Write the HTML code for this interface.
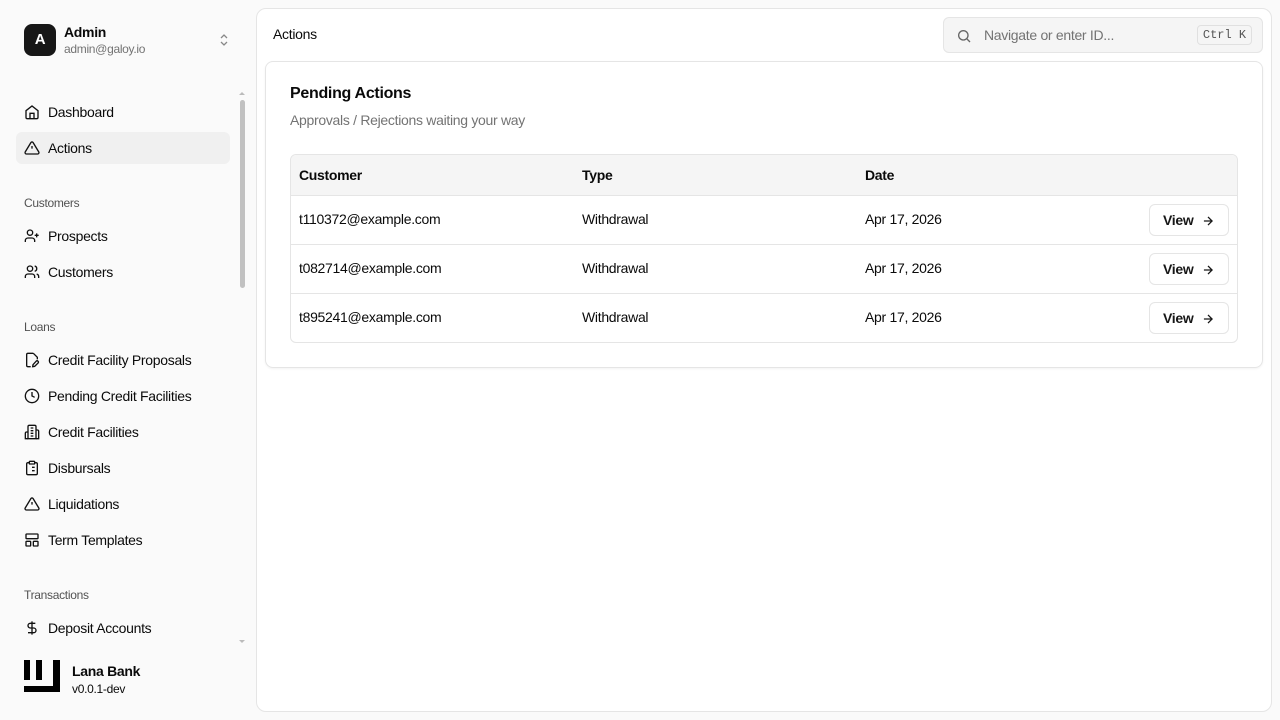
<!DOCTYPE html>
<html><head><meta charset="utf-8"><style>
*{box-sizing:border-box;margin:0;padding:0}
body{width:1280px;height:720px;background:#fafafa;font-family:"Liberation Sans",sans-serif;color:#0a0a0a;position:relative;overflow:hidden;letter-spacing:-0.3px}
.sb{position:absolute;left:0;top:0;width:256px;height:720px}
.av{position:absolute;left:24px;top:24px;width:32px;height:32px;background:#171717;border-radius:8px;color:#fff;font-size:15px;font-weight:bold;text-align:center;line-height:32px}
.nm{position:absolute;left:64px;top:24px;font-size:14px;font-weight:bold}
.em{position:absolute;left:64px;top:42px;font-size:12px;color:#737373}
.item{position:absolute;left:16px;width:214px;height:32px;border-radius:6px;font-size:14px;line-height:32px;padding-left:32px}
.item svg{position:absolute;left:8px;top:8px}
.act{background:#f0f0f0}
.grp{position:absolute;left:24px;font-size:12px;color:#525252}
.sc{position:absolute;left:240px;top:100px;width:5px;height:188px;background:#c1c1c1;border-radius:3px}
.main{position:absolute;left:256px;top:8px;width:1016px;height:704px;background:#fff;border:1px solid #e5e5e5;border-radius:10px}
.card{position:absolute;left:265px;top:61px;width:998px;height:307px;border:1px solid #e5e5e5;border-radius:8px;box-shadow:0 1px 2px rgba(0,0,0,.05)}
.srch{position:absolute;left:943px;top:17px;width:320px;height:36px;background:#f5f5f5;border:1px solid #e5e5e5;border-radius:6px}
.tbl{position:absolute;left:290px;top:154px;width:948px;height:189px;border:1px solid #e5e5e5;border-radius:6px;overflow:hidden}
.row{position:absolute;left:0;width:100%;height:49px;border-top:1px solid #e5e5e5;font-size:14px}
.row span{position:absolute;top:15px}
.btn{position:absolute;left:858px;top:8px;width:80px;height:32px;border:1px solid #e5e5e5;border-radius:6px;font-size:14px;font-weight:bold;line-height:30px;padding-left:13px;color:#171717}
.btn svg{position:absolute;left:51px;top:9px}
</style></head><body>
<div class="sb">
<div class="av">A</div><div class="nm">Admin</div><div class="em">admin@galoy.io</div>
<svg style="position:absolute;left:218px;top:33px" width="12" height="14" viewBox="0 0 12 14" fill="none" stroke="#888" stroke-width="1.3"><path d="M3 5l3-3 3 3M3 9l3 3 3-3"/></svg>
<div class="item" style="top:96px"><svg width="16" height="16" viewBox="0 0 24 24" fill="none" stroke="#111" stroke-width="2"><path d="M3 10l9-7 9 7v10a2 2 0 0 1-2 2H5a2 2 0 0 1-2-2z"/><path d="M9 22v-8h6v8"/></svg>Dashboard</div>
<div class="item act" style="top:132px"><svg width="16" height="16" viewBox="0 0 24 24" fill="none" stroke="#111" stroke-width="2"><path d="M10.3 3.9L1.8 18a2 2 0 0 0 1.7 3h17a2 2 0 0 0 1.7-3L13.7 3.9a2 2 0 0 0-3.4 0z"/><path d="M12 9v4M12 17h.01"/></svg>Actions</div>
<div class="grp" style="top:196px">Customers</div>
<div class="item" style="top:220px"><svg width="16" height="16" viewBox="0 0 24 24" fill="none" stroke="#111" stroke-width="2"><circle cx="9" cy="7" r="4"/><path d="M2 21v-2a4 4 0 0 1 4-4h6a4 4 0 0 1 4 4v2M19 8v6M16 11h6"/></svg>Prospects</div>
<div class="item" style="top:256px"><svg width="16" height="16" viewBox="0 0 24 24" fill="none" stroke="#111" stroke-width="2"><circle cx="9" cy="7" r="4"/><path d="M2 21v-2a4 4 0 0 1 4-4h6a4 4 0 0 1 4 4v2M16 3.1a4 4 0 0 1 0 7.8M22 21v-2a4 4 0 0 0-3-3.9"/></svg>Customers</div>
<div class="grp" style="top:320px">Loans</div>
<div class="item" style="top:344px"><svg width="16" height="16" viewBox="0 0 24 24" fill="none" stroke="#111" stroke-width="2"><path d="M14 2H6a2 2 0 0 0-2 2v16a2 2 0 0 0 2 2h4M14 2l6 6v3"/><path d="M18.4 13.6a2 2 0 0 1 2.8 2.8L16 21.5l-3 .5.5-3z"/></svg>Credit Facility Proposals</div>
<div class="item" style="top:380px"><svg width="16" height="16" viewBox="0 0 24 24" fill="none" stroke="#111" stroke-width="2"><circle cx="12" cy="12" r="10"/><path d="M12 6v6l4 2"/></svg>Pending Credit Facilities</div>
<div class="item" style="top:416px"><svg width="16" height="16" viewBox="0 0 24 24" fill="none" stroke="#111" stroke-width="2"><path d="M6 22V4a2 2 0 0 1 2-2h8a2 2 0 0 1 2 2v18z"/><path d="M6 12H4a2 2 0 0 0-2 2v8h4M18 9h2a2 2 0 0 1 2 2v11h-4M10 6h4M10 10h4M10 14h4M10 18h4"/></svg>Credit Facilities</div>
<div class="item" style="top:452px"><svg width="16" height="16" viewBox="0 0 24 24" fill="none" stroke="#111" stroke-width="2"><rect x="8" y="2" width="8" height="4" rx="1"/><path d="M16 4h2a2 2 0 0 1 2 2v14a2 2 0 0 1-2 2H6a2 2 0 0 1-2-2V6a2 2 0 0 1 2-2h2M12 11h4M12 16h4M8 11h.01M8 16h.01"/></svg>Disbursals</div>
<div class="item" style="top:488px"><svg width="16" height="16" viewBox="0 0 24 24" fill="none" stroke="#111" stroke-width="2"><path d="M10.3 3.9L1.8 18a2 2 0 0 0 1.7 3h17a2 2 0 0 0 1.7-3L13.7 3.9a2 2 0 0 0-3.4 0z"/><path d="M12 9v4M12 17h.01"/></svg>Liquidations</div>
<div class="item" style="top:524px"><svg width="16" height="16" viewBox="0 0 24 24" fill="none" stroke="#111" stroke-width="2"><rect x="3" y="3" width="18" height="7" rx="1"/><rect x="3" y="14" width="7" height="7" rx="1"/><rect x="14" y="14" width="7" height="7" rx="1"/></svg>Term Templates</div>
<div class="grp" style="top:588px">Transactions</div>
<div class="item" style="top:612px"><svg width="16" height="16" viewBox="0 0 24 24" fill="none" stroke="#111" stroke-width="2"><path d="M12 2v20M17 5H9.5a3.5 3.5 0 0 0 0 7h5a3.5 3.5 0 0 1 0 7H6"/></svg>Deposit Accounts</div>
<div class="sc"></div>
<svg style="position:absolute;left:238px;top:90px" width="8" height="6"><path d="M1 5l3-3 3 3" fill="#bbb"/></svg>
<svg style="position:absolute;left:238px;top:639px" width="8" height="6"><path d="M1 1l3 3 3-3" fill="#bbb"/></svg>
<svg style="position:absolute;left:24px;top:660px" width="36" height="32"><rect x="0" y="0" width="6" height="20" fill="#000"/><rect x="12" y="0" width="6" height="20" fill="#000"/><rect x="29" y="0" width="7" height="32" fill="#000"/><rect x="0" y="26" width="36" height="6" fill="#000"/></svg>
<div style="position:absolute;left:72px;top:663px;font-size:14px;font-weight:bold">Lana Bank</div>
<div style="position:absolute;left:72px;top:682px;font-size:12px">v0.0.1-dev</div>
</div>
<div class="main"></div>
<div style="position:absolute;left:273px;top:26px;font-size:14px">Actions</div>
<div class="srch">
<svg style="position:absolute;left:12px;top:10px" width="16" height="16" viewBox="0 0 24 24" fill="none" stroke="#666" stroke-width="2"><circle cx="11" cy="11" r="7"/><path d="M21 21l-4.3-4.3"/></svg>
<div style="position:absolute;left:40px;top:9px;font-size:14px;color:#737373">Navigate or enter ID...</div>
<div style="position:absolute;left:253px;top:7px;width:55px;height:20px;border:1px solid #e0e0e0;border-radius:4px;font-family:'Liberation Mono',monospace;font-size:12px;color:#555;text-align:center;line-height:18px;letter-spacing:0">Ctrl K</div>
</div>
<div class="card"></div>
<div style="position:absolute;left:290px;top:85px;font-size:16px;font-weight:bold">Pending Actions</div>
<div style="position:absolute;left:290px;top:112px;font-size:14px;color:#737373">Approvals / Rejections waiting your way</div>
<div class="tbl">
<div style="position:absolute;left:0;top:0;width:100%;height:41px;background:#f5f5f5;font-size:14px;font-weight:bold"><span style="position:absolute;left:8px;top:12px">Customer</span><span style="position:absolute;left:291px;top:12px">Type</span><span style="position:absolute;left:574px;top:12px">Date</span></div>
<div class="row" style="top:40px"><span style="left:8px">t110372@example.com</span><span style="left:291px">Withdrawal</span><span style="left:574px">Apr 17, 2026</span><div class="btn">View<svg width="14" height="14" viewBox="0 0 24 24" fill="none" stroke="#171717" stroke-width="2.2"><path d="M5 12h14M12 5l7 7-7 7"/></svg></div></div>
<div class="row" style="top:89px"><span style="left:8px">t082714@example.com</span><span style="left:291px">Withdrawal</span><span style="left:574px">Apr 17, 2026</span><div class="btn">View<svg width="14" height="14" viewBox="0 0 24 24" fill="none" stroke="#171717" stroke-width="2.2"><path d="M5 12h14M12 5l7 7-7 7"/></svg></div></div>
<div class="row" style="top:138px"><span style="left:8px">t895241@example.com</span><span style="left:291px">Withdrawal</span><span style="left:574px">Apr 17, 2026</span><div class="btn">View<svg width="14" height="14" viewBox="0 0 24 24" fill="none" stroke="#171717" stroke-width="2.2"><path d="M5 12h14M12 5l7 7-7 7"/></svg></div></div>
</div>
</body></html>
